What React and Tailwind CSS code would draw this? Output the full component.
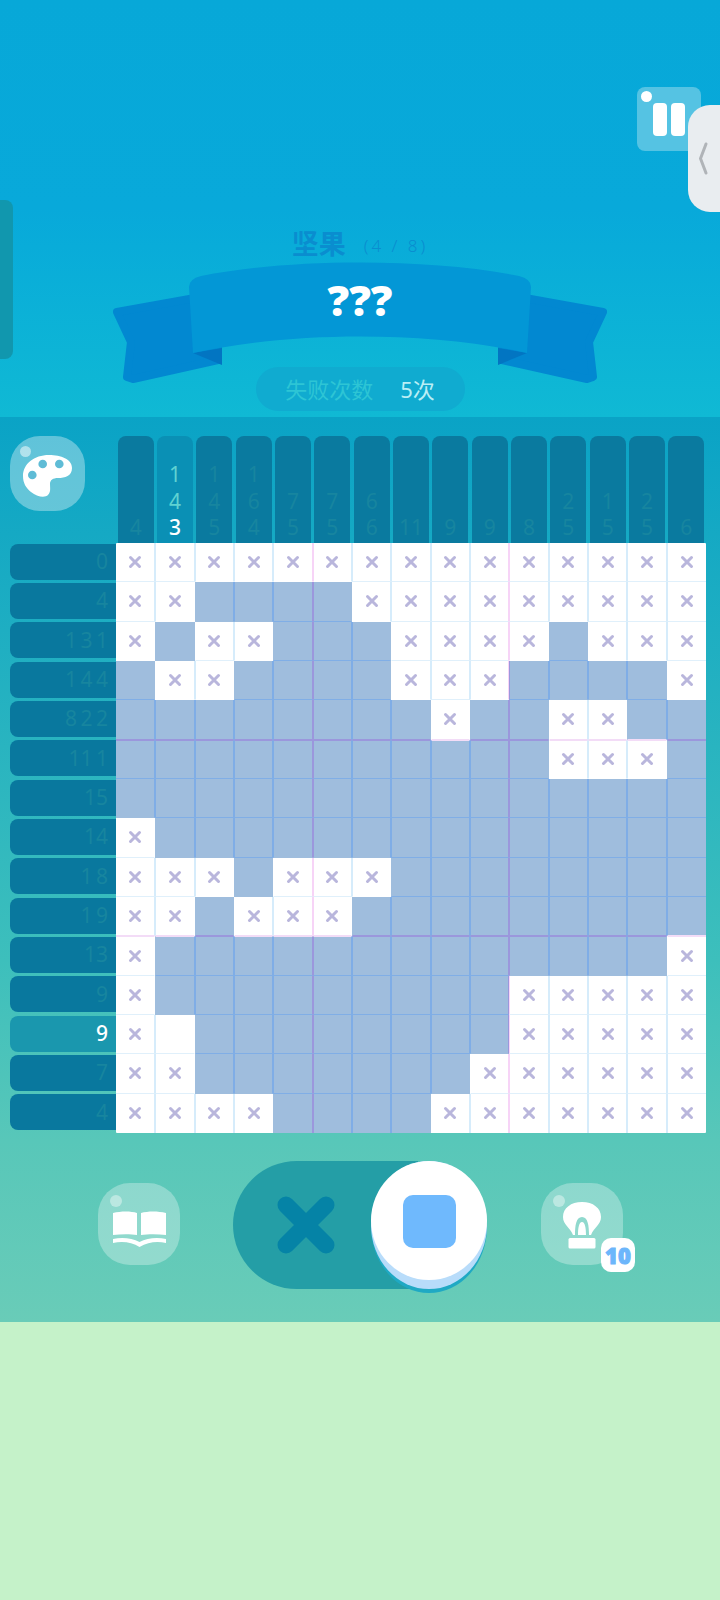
const GRID = [
  'xxxxxxxxxxxxxxx',
  'xx....xxxxxxxxx',
  'x.xx...xxxx.xxx',
  '.xx....xxx....x',
  '........x..xx..',
  '...........xxx.',
  '...............',
  'x..............',
  'xxx.xxx........',
  'xx.xxx.........',
  'x.............x',
  'x.........xxxxx',
  'x_........xxxxx',
  'xx.......xxxxxx',
  'xxxx....xxxxxxx',
];

const COLUMN_CLUES = [
  ['4'], ['1', '4', '3'], ['1', '4', '5'], ['1', '6', '4'], ['7', '5'],
  ['7', '5'], ['6', '6'], ['11'], ['9'], ['9'],
  ['8'], ['2', '5'], ['1', '5'], ['2', '5'], ['6'],
];

const ROW_CLUES = [
  '0', '4', '1 3 1', '1 4 4', '8 2 2', '11 1', '15', '14',
  '1 8', '1 9', '13', '9', '9', '7', '4',
];

const isBlue = (r, c) => GRID[r]?.[c] === '.';

// vertical line on one side of a cell, half of the 2px line sits in each neighbour
const sideClass = (r, c, other, side) => {
  if (other < 0 || other > 14) return side === 'l' ? 'border-l-0' : 'border-r-0';
  const major = Math.max(c, other) % 5 === 0;
  const blue = isBlue(r, c);
  const same = blue === isBlue(r, other);
  if (side === 'l') {
    if (major) return blue ? 'border-l border-l-[#9b97dc]' : 'border-l border-l-[#f7d4f7]';
    if (!same) return blue ? 'border-l border-l-[#9fbddd]' : 'border-l border-l-white';
    return blue ? 'border-l border-l-[#7fade6]' : 'border-l border-l-[#d6ecfb]';
  }
  if (major) return blue ? 'border-r border-r-[#9b97dc]' : 'border-r border-r-[#f7d4f7]';
  if (!same) return blue ? 'border-r border-r-[#9fbddd]' : 'border-r border-r-white';
  return blue ? 'border-r border-r-[#7fade6]' : 'border-r border-r-[#d6ecfb]';
};

const rowLineClass = (r, c) => {
  const blue = isBlue(r, c);
  const major = (r + 1) % 5 === 0 && r < 14;
  const majorAbove = r % 5 === 0 && r > 0;
  const bottom = r === 14 ? 'border-b-0'
    : major ? (blue && isBlue(r + 1, c) ? 'border-b border-b-[#9b97dc]' : 'border-b border-b-[#f3dcf7]')
    : blue !== isBlue(r + 1, c) ? (blue ? 'border-b border-b-[#9fbddd]' : 'border-b border-b-white')
    : blue ? 'border-b border-b-[#80aee6]' : 'border-b border-b-[#e0f0fb]';
  const top = majorAbove
    ? (blue && isBlue(r - 1, c) ? 'border-t border-t-[#9b97dc]' : 'border-t border-t-[#f3dcf7]')
    : 'border-t-0';
  return `${top} ${bottom}`;
};

const CrossMark = () => (
  <svg width="14" height="14" viewBox="0 0 14 14" fill="none" stroke="#b9b6dc" strokeWidth="3" strokeLinecap="round">
    <path d="M2.5 2.5 11.5 11.5M11.5 2.5 2.5 11.5" />
  </svg>
);

const Ribbon = () => (
  <svg width="520" height="122" viewBox="0 0 520 122" className="shrink-0">
    <g fill="#0288d1" stroke="#0288d1" strokeWidth="8" strokeLinejoin="round">
      <path d="M95 36 17 50 31 80 27 115 33 117 118 98 118 60Z" />
      <path d="M425 36 503 50 489 80 493 115 487 117 402 98 402 60Z" />
    </g>
    <path d="M93 91 122 86V103Z" fill="#0275c2" />
    <path d="M427 91 398 86V103Z" fill="#0275c2" />
    <path
      d="M89 25Q89 17 101 14C190 -4 330 -4 419 14Q431 17 431 25L427 91C330 69 190 69 93 91Z"
      fill="#0397d6"
    />
  </svg>
);

const PaletteIcon = () => (
  <svg width="49" height="42" viewBox="0 0 49 42">
    <path
      d="M0 21C0 9 11 0 26 0C38 0 49 4 49 13C49 21 42 23 35 23C30 23 27 25 27 29C27 33 28 37 25 40C22 43 14 42 8 37C3 33 0 28 0 21Z"
      fill="#fff"
    />
    <circle cx="19.7" cy="9" r="4.3" fill="#5fbcd6" />
    <circle cx="36.3" cy="9" r="4.3" fill="#5fbcd6" />
    <circle cx="9.3" cy="20" r="4.3" fill="#5fbcd6" />
  </svg>
);

const BookIcon = () => (
  <svg width="53" height="36" viewBox="0 0 53 36" fill="#fff">
    <path d="M0 2C8 0 18 0 24 2V24C18 23 8 23 0 24Z" />
    <path d="M53 2C45 0 35 0 28 2V24C35 23 45 23 53 24Z" />
    <path d="M0 28C9 26 19 27 26.5 31C34 27 44 26 53 28V32C44 30 35 31 26.5 36C19 31 9 30 0 32Z" />
  </svg>
);

const BulbIcon = () => (
  <svg width="38" height="47" viewBox="0 0 38 47" fill="#fff">
    <path
      fillRule="evenodd"
      d="M19 0C30 0 38 6 38 15C38 23 31 25 28 33H10C7 25 0 23 0 15C0 6 8 0 19 0ZM12 33C12 24 13 15 19 15C25 15 26 24 26 33H23C23 26 22 20 19 20C16 20 15 26 15 33Z"
    />
    <rect x="5.5" y="36" width="27" height="10.5" rx="1.5" />
  </svg>
);

const RoundButton = ({ children, size, dot, dotSize }) => (
  <div className={`relative flex items-center justify-center bg-white/30 ${size}`}>
    <span className={`absolute rounded-full bg-white/40 ${dot} ${dotSize}`} />
    {children}
  </div>
);

const App = () => {
  return (
    <div className="flex h-[1600px] w-[720px] flex-col overflow-hidden bg-[#c5f2c9] font-['Noto_Sans','Noto_Sans_CJK_SC',sans-serif]">
      {/* Top area */}
      <div className="relative flex h-[417px] shrink-0 flex-col items-center bg-gradient-to-b from-[#07a8d8] via-[#08a9da] to-[#10b9d4] pt-[224px]">
        {/* pause, and the two system handles lying over the page */}
        <div className="absolute left-[637px] top-[87px] flex h-[64px] w-[64px] items-start justify-start gap-1 rounded-lg bg-[#55c3e3] pl-4 pt-4">
          <span className="absolute left-[4px] top-[4px] h-[11px] w-[11px] rounded-full bg-white" />
          <span className="h-[33px] w-[14px] rounded bg-white" />
          <span className="h-[33px] w-[14px] rounded bg-white" />
        </div>
        <div className="absolute left-[688px] top-[105px] flex h-[107px] w-[32px] items-center rounded-l-[22px] bg-[#e9edf0] pl-[10px]">
          <svg width="10" height="35" viewBox="0 0 10 35" fill="none" stroke="#b0b4b8" strokeWidth="3" strokeLinecap="round" strokeLinejoin="round">
            <path d="M8 3 2.5 17.5 8 32" />
          </svg>
        </div>
        <div className="absolute left-0 top-[200px] h-[159px] w-[13px] rounded-r-lg bg-[#1197ae]" />

        <div className="flex h-[38px] items-center text-[#0a8dcf]">
          <span className="text-[27px] leading-none font-bold">坚果</span>
          <span className="mt-[4px] ml-[18px] text-[17px] leading-none font-light tracking-[3px]">(4 / 8)</span>
        </div>
        <div className="relative flex h-[122px] w-[520px] justify-center">
          <Ribbon />
          <span className="absolute left-0 right-0 top-[9px] text-center text-[43px] leading-[58px] font-black text-white">???</span>
        </div>
        <div className="-mt-[17px] flex h-[44px] w-[209px] items-center justify-center rounded-full bg-[#10abd0] text-[22px] leading-none">
          <span className="text-[#2dc5d5]">失败次数</span>
          <span className="ml-[27px] text-[#b9eef5]">5次</span>
        </div>
      </div>

      {/* Board area */}
      <div className="flex h-[905px] shrink-0 flex-col bg-[linear-gradient(to_bottom,#0aa3c6_0%,#3dbfbc_60%,#58c7b9_80%,#69ccb8_100%)]">
        <div className="flex pt-[19px] pl-[10px]">
          <div className="relative flex h-[75px] w-[75px] items-center justify-center rounded-[30px] bg-white/35">
            <span className="absolute left-[10px] top-[10px] h-[11px] w-[11px] rounded-full bg-white/50" />
            <div className="mt-[5px]">
              <PaletteIcon />
            </div>
          </div>
          <div className="ml-[31px] grid w-[590px] grid-cols-15">
            {COLUMN_CLUES.map((clue, c) => (
              <div key={c} className="flex justify-center">
                <div
                  className={`flex h-[107px] w-[36px] flex-col items-center justify-end rounded-t-lg pb-[2px] text-[21px] leading-[26.7px] ${
                    c === 1 ? 'bg-[#0a90b5] text-[#5fd2d2]' : 'bg-[#0a7a9f] text-[#17859f]'
                  }`}
                >
                  {clue.map((n, i) => (
                    <span key={i} className={c === 1 && i === clue.length - 1 ? 'font-medium text-white' : ''}>
                      {n}
                    </span>
                  ))}
                </div>
              </div>
            ))}
          </div>
        </div>

        <div className="flex pl-[10px]">
          <div className="grid h-[590px] w-[106px] grid-rows-15">
            {ROW_CLUES.map((clue, r) => (
              <div key={r} className="flex items-center">
                <div
                  className={`mb-[2px] flex h-[36px] w-full items-center justify-end rounded-l-lg pr-[8px] text-[21px] leading-none whitespace-pre ${
                    r === 12 ? 'bg-[#1a97ae] font-medium text-white' : 'bg-[#09789e] text-[#17859f]'
                  }`}
                >
                  {clue.replaceAll(' ', '\u2009')}
                </div>
              </div>
            ))}
          </div>
          <div className="grid h-[590px] w-[590px] grid-cols-15 grid-rows-15 overflow-hidden rounded-[1px]">
            {GRID.map((row, r) =>
              row.split('').map((cell, c) => (
                <div
                  key={`${r}-${c}`}
                  className={`flex items-center justify-center ${cell === '.' ? 'bg-[#9fbddd]' : 'bg-white'} ${sideClass(r, c, c - 1, 'l')} ${sideClass(r, c, c + 1, 'r')} ${rowLineClass(r, c)}`}
                >
                  {cell === 'x' && <CrossMark />}
                </div>
              ))
            )}
          </div>
        </div>

        {/* Tools */}
        <div className="mt-[28px] flex items-start pl-[98px]">
          <div className="mt-[22px]">
            <RoundButton size="h-[82px] w-[82px] rounded-[32px]" dot="left-[12px] top-[12px]" dotSize="h-[12px] w-[12px]">
              <div className="mt-[10px]">
                <BookIcon />
              </div>
            </RoundButton>
          </div>
          <div className="relative ml-[53px] h-[128px] w-[185px] rounded-l-full bg-[#249ea6] pl-[40px] pt-[31px]">
            <svg width="66" height="66" viewBox="0 0 66 66" fill="none" stroke="#0583a6" strokeWidth="17" strokeLinecap="round">
              <path d="M13 13 53 53M53 13 13 53" />
            </svg>
            <div className="absolute left-[138px] top-0 h-[132px] w-[116px] rounded-[50%] bg-[#1fa9c4]" />
            <div className="absolute left-[138px] top-0 h-[128px] w-[116px] rounded-[50%] bg-[#b8dcfa]" />
            <div className="absolute left-[138px] top-0 flex h-[119px] w-[116px] items-center justify-center rounded-[50%] bg-white">
              <div className="mt-[1px] h-[53px] w-[53px] rounded-[10px] bg-[#6fb9fd]" />
            </div>
          </div>
          <div className="relative mt-[22px] ml-[123px]">
            <RoundButton size="h-[82px] w-[82px] rounded-[32px]" dot="left-[12px] top-[12px]" dotSize="h-[12px] w-[12px]">
              <div className="mt-[3px]">
                <BulbIcon />
              </div>
            </RoundButton>
            <div className="absolute left-[60px] top-[55px] flex h-[34px] w-[34px] items-center justify-center rounded-[10px] bg-white text-[22px] leading-none font-black text-[#6cb6fb] [-webkit-text-stroke:1px_#6cb6fb]">
              10
            </div>
          </div>
        </div>
      </div>
    </div>
  );
};

export default App;
